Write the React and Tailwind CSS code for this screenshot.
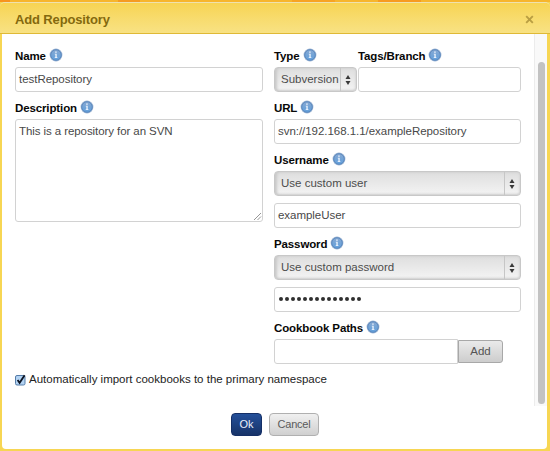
import React from "react";

function InfoIcon() {
  return (
    <svg width="14" height="14" viewBox="0 0 14 14" className="-mt-[4px] block shrink-0">
      <defs>
        <linearGradient id="info" x1="0" y1="0" x2="0" y2="1">
          <stop offset="0" stopColor="#86a8d2" />
          <stop offset="1" stopColor="#62a0dc" />
        </linearGradient>
      </defs>
      <circle cx="7" cy="7" r="6.4" fill="#9db5d3" />
      <circle cx="7" cy="7" r="5.3" fill="url(#info)" stroke="#5583bb" strokeWidth="0.9" />
      <path d="M6.2 3.5h1.5v1.3H6.2zM5.8 5.8h1.9v3.5h.7v.8H5.7v-.8h.7V6.6h-.6z" fill="#f0f6fd" />
    </svg>
  );
}

function Label({ children }) {
  return (
    <div className="flex h-5 items-center gap-[3px] pb-[1px]">
      <span className="text-[11.5px] leading-[17px] font-bold tracking-[-0.12px] whitespace-nowrap text-[#080808]">{children}</span>
      <InfoIcon />
    </div>
  );
}

function Field({ children, className = "" }) {
  return (
    <div className={`flex h-[25px] items-center rounded-[3px] border border-[#d2d2d2] bg-white px-[3px] text-[11.5px] tracking-[-0.04px] text-[#484848] ${className}`}>
      {children}
    </div>
  );
}

function Select({ children }) {
  return (
    <div className="flex h-[25px] items-stretch rounded-[4px] border border-[#c8c8c8] bg-linear-to-b from-[#dedede] to-[#f4f4f4] text-[11.5px] text-[#4c4c4c] shadow-[inset_2px_0_3px_#c8c8c8,inset_-1px_-1px_2px_#d8d8d8]">
      <div className="flex flex-1 items-center overflow-hidden pl-[6px] whitespace-nowrap">{children}</div>
      <div className="flex w-[16px] items-center justify-center border-l border-[#c6c6c6] pr-[1px]">
        <svg width="6" height="10" viewBox="0 0 6 10">
          <path d="M3 0L5.5 4H.5zM3 10L.5 6h5z" fill="#383838" />
        </svg>
      </div>
    </div>
  );
}

export default function App() {
  return (
    <div className="flex h-[451px] w-[550px] flex-col overflow-hidden bg-[#f7d653] font-['Liberation_Sans',Arial,sans-serif]">
      <div className="flex h-[2px] shrink-0 bg-[#f7b52c]">
        <div className="w-[10px] bg-[#f7941e]" />
        <div className="ml-[108px] w-[22px] bg-[#f59a22]" />
        <div className="ml-[152px] w-[43px] bg-[#f7a323]" />
        <div className="ml-[43px] w-[43px] bg-[#f79a20]" />
      </div>
      <div className="flex h-[449px] flex-col rounded-t-[5px] border-t border-[#efe1ae] pb-[2px]">
        <div className="flex h-[31px] shrink-0 items-center justify-between rounded-t-[5px] border-b border-[#dfb936] bg-linear-to-b from-[#f7d452] to-[#f8e283] pr-[16px] pl-[15px]">
          <span className="mt-[3px] text-[13px] leading-4 font-bold tracking-[-0.14px] text-[#84690e]">Add Repository</span>
          <svg width="9" height="9" viewBox="0 0 9 9" className="mt-[2px]">
            <path d="M1.2 1.2l6.6 6.6M7.8 1.2L1.2 7.8" stroke="#b99e42" strokeWidth="1.9" />
          </svg>
        </div>
        <div className="mr-[3px] ml-[2px] flex flex-1 flex-col rounded-b-[4px] bg-white">
          <div className="flex h-[372px]">
            <div className="w-[532px] pt-[13px] pl-[13px]">
              <div className="flex h-[317px] gap-[11px]">
                <div className="w-[248px]">
                  <Label>Name</Label>
                  <Field>testRepository</Field>
                  <div className="h-[7px]" />
                  <Label>Description</Label>
                  <div className="flex h-[103px] items-start justify-between rounded-[3px] border border-[#d2d2d2] pt-[3px] pl-[3px] text-[11.5px] leading-4 tracking-[-0.08px] text-[#484848]">
                    <span>This is a repository for an SVN</span>
                    <svg width="9" height="9" viewBox="0 0 9 9" className="self-end">
                      <path d="M1 8L8 1M4.5 8L8 4.5" stroke="#8a8a8a" strokeWidth="0.9" />
                    </svg>
                  </div>
                </div>
                <div className="w-[247px]">
                  <div className="flex gap-[1px]">
                    <div className="w-[83px]">
                      <Label>Type</Label>
                      <Select>Subversion</Select>
                    </div>
                    <div className="w-[163px]">
                      <Label>Tags/Branch</Label>
                      <Field />
                    </div>
                  </div>
                  <div className="h-[7px]" />
                  <Label>URL</Label>
                  <Field>svn://192.168.1.1/exampleRepository</Field>
                  <div className="h-[7px]" />
                  <Label>Username</Label>
                  <Select>Use custom user</Select>
                  <div className="h-[7px]" />
                  <Field>exampleUser</Field>
                  <div className="h-[7px]" />
                  <Label>Password</Label>
                  <Select>Use custom password</Select>
                  <div className="h-[7px]" />
                  <Field>
                    <div className="flex gap-[2px] pb-[2px] pl-[1px]">
                      {Array.from({ length: 14 }, (_, i) => (
                        <span key={i} className="size-[4px] rounded-full bg-[#303030]" />
                      ))}
                    </div>
                  </Field>
                  <div className="h-[7px]" />
                  <Label>Cookbook Paths</Label>
                  <div className="flex items-center">
                    <Field className="w-[184px] rounded-r-none" />
                    <button className="h-[23px] w-[45px] rounded-r-[3px] border border-[#a8a8a8] bg-linear-to-b from-[#eaeaea] to-[#cdcdcd] text-[11.5px] leading-none text-[#545454]">Add</button>
                  </div>
                </div>
              </div>
              <div className="mt-[8px] flex h-4 items-center gap-[3px]">
                <svg width="11" height="12" viewBox="0 0 11 12">
                  <rect x="0.5" y="1.5" width="9.5" height="9.5" rx="1.5" fill="#b3d3f3" stroke="#557ca8" />
                  <path d="M2.6 6l2 2.8L9.6 1.2" fill="none" stroke="#0c1422" strokeWidth="1.8" />
                </svg>
                <span className="text-[11.5px] whitespace-nowrap text-[#222]">Automatically import cookbooks to the primary namespace</span>
              </div>
            </div>
            <div className="w-[13px] border-l border-[#ececec] bg-[#f9f9f9] pt-[28px] pl-[3px]">
              <div className="h-[342px] w-[7px] rounded-full bg-[#c2c2c2]" />
            </div>
          </div>
          <div className="flex gap-[7px] pt-[7px] pl-[229px]">
            <button className="h-[23px] w-[31px] rounded-[4px] border border-[#152f66] bg-linear-to-b from-[#24509a] to-[#173368] text-[11px] leading-none text-[#e8effa]">Ok</button>
            <button className="h-[23px] w-[50px] rounded-[4px] border border-[#b0b0b0] bg-linear-to-b from-[#f0f0f0] to-[#d0d0d0] text-[11px] leading-none tracking-[-0.2px] text-[#5a5a5a]">Cancel</button>
          </div>
        </div>
      </div>
    </div>
  );
}
